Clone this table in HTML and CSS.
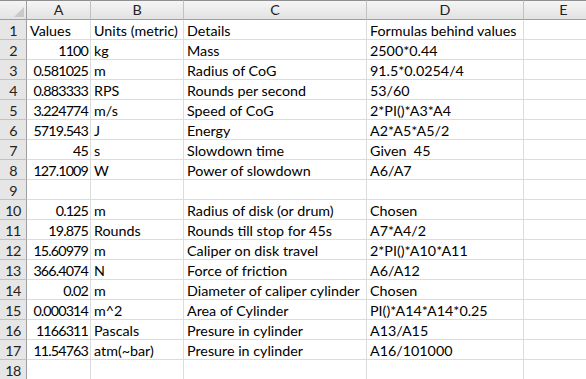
FILE: index.html
```html
<!DOCTYPE html>
<html>
<head>
<meta charset="utf-8">
<link rel="stylesheet" href="styles.css">
</head>
<body>
<div class="sheet">
  <div class="corner"><svg class="tri" width="10" height="10" viewBox="0 0 10 10"><polygon points="10,0 10,10 0,10" fill="#c9c9c9"/></svg></div>
  <div class="ch">A</div><div class="ch">B</div><div class="ch">C</div><div class="ch">D</div><div class="ch last">E</div>

  <div class="rh">1</div><div class="c">Values</div><div class="c">Units (metric)</div><div class="c">Details</div><div class="c">Formulas behind values</div><div class="c"></div>
  <div class="rh">2</div><div class="c n">1100</div><div class="c">kg</div><div class="c">Mass</div><div class="c">2500*0.44</div><div class="c"></div>
  <div class="rh">3</div><div class="c n">0.581025</div><div class="c">m</div><div class="c">Radius of CoG</div><div class="c">91.5*0.0254/4</div><div class="c"></div>
  <div class="rh">4</div><div class="c n">0.883333</div><div class="c">RPS</div><div class="c">Rounds per second</div><div class="c">53/60</div><div class="c"></div>
  <div class="rh">5</div><div class="c n">3.224774</div><div class="c">m/s</div><div class="c">Speed of CoG</div><div class="c">2*PI()*A3*A4</div><div class="c"></div>
  <div class="rh">6</div><div class="c n">5719.543</div><div class="c">J</div><div class="c">Energy</div><div class="c">A2*A5*A5/2</div><div class="c"></div>
  <div class="rh">7</div><div class="c n">45</div><div class="c">s</div><div class="c">Slowdown time</div><div class="c">Given&nbsp; 45</div><div class="c"></div>
  <div class="rh">8</div><div class="c n">127.1009</div><div class="c">W</div><div class="c">Power of slowdown</div><div class="c">A6/A7</div><div class="c"></div>
  <div class="rh">9</div><div class="c"></div><div class="c"></div><div class="c"></div><div class="c"></div><div class="c"></div>
  <div class="rh">10</div><div class="c n">0.125</div><div class="c">m</div><div class="c">Radius of disk (or drum)</div><div class="c">Chosen</div><div class="c"></div>
  <div class="rh">11</div><div class="c n">19.875</div><div class="c">Rounds</div><div class="c">Rounds till stop for 45s</div><div class="c">A7*A4/2</div><div class="c"></div>
  <div class="rh">12</div><div class="c n">15.60979</div><div class="c">m</div><div class="c">Caliper on disk travel</div><div class="c">2*PI()*A10*A11</div><div class="c"></div>
  <div class="rh">13</div><div class="c n">366.4074</div><div class="c">N</div><div class="c">Force of friction</div><div class="c">A6/A12</div><div class="c"></div>
  <div class="rh">14</div><div class="c n">0.02</div><div class="c">m</div><div class="c">Diameter of caliper cylinder</div><div class="c">Chosen</div><div class="c"></div>
  <div class="rh">15</div><div class="c n">0.000314</div><div class="c">m^2</div><div class="c">Area of Cylinder</div><div class="c">PI()*A14*A14*0.25</div><div class="c"></div>
  <div class="rh">16</div><div class="c n">1166311</div><div class="c">Pascals</div><div class="c">Presure in cylinder</div><div class="c">A13/A15</div><div class="c"></div>
  <div class="rh">17</div><div class="c n">11.54763</div><div class="c">atm(~bar)</div><div class="c">Presure in cylinder</div><div class="c">A16/101000</div><div class="c"></div>
  <div class="rh">18</div><div class="c"></div><div class="c"></div><div class="c"></div><div class="c"></div><div class="c"></div>
</div>
</body>
</html>
```
FILE: styles.css
```css
html, body {
  margin: 0;
  padding: 0;
  background: #ffffff;
  overflow: hidden;
}
.sheet {
  display: grid;
  grid-template-columns: 27px 64px 93px 183px 157px 80px;
  grid-template-rows: repeat(19, 20px);
  width: 604px;
  font-family: Lato, "Liberation Sans", sans-serif;
  font-size: 14.3px;
  color: #000;
}
.corner {
  background: linear-gradient(#f4f4f4, #e3e3e3);
  border-right: 1px solid #9e9e9e;
  border-bottom: 1px solid #9e9e9e;
  border-top: 1px solid #8f8f8f;
  box-sizing: border-box;
  display: flex;
  align-items: flex-end;
  justify-content: flex-end;
  padding: 0 2px 2px 0;
}
.tri { display: block; }
.ch {
  background: linear-gradient(#f5f5f5, #e2e2e2);
  border-right: 1px solid #c2c2c2;
  border-bottom: 1px solid #9e9e9e;
  border-top: 1px solid #8f8f8f;
  box-sizing: border-box;
  display: flex;
  align-items: center;
  justify-content: center;
  color: #222;
  line-height: 18px;
}
.rh {
  background: #e6e6e6;
  border-right: 1px solid #9e9e9e;
  border-bottom: 1px solid #c2c2c2;
  box-sizing: border-box;
  display: flex;
  align-items: center;
  justify-content: center;
  color: #222;
  padding-top: 1px;
  letter-spacing: -0.6px;
}
.c {
  border-right: 1px solid #dadcdd;
  border-bottom: 1px solid #dadcdd;
  box-sizing: border-box;
  padding: 1px 3px 0 3px;
  display: flex;
  align-items: center;
  white-space: nowrap;
  overflow: hidden;
}
.n {
  justify-content: flex-end;
  padding-right: 2px;
  letter-spacing: -0.85px;
}
```
